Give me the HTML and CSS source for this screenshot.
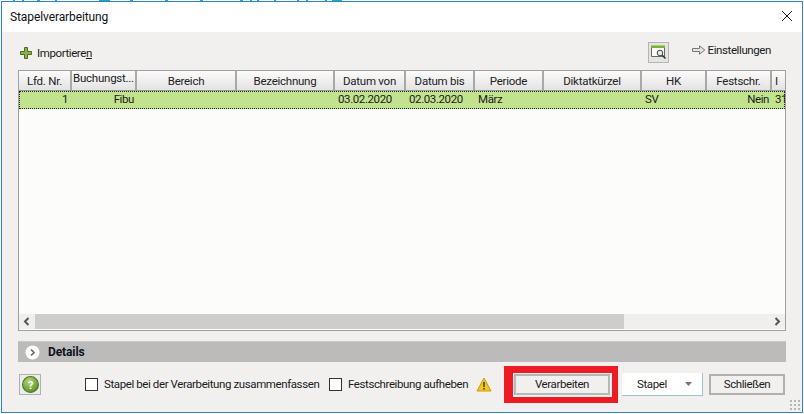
FILE: index.html
```html
<!DOCTYPE html>
<html lang="de">
<head>
<meta charset="utf-8">
<title>Stapelverarbeitung</title>
<link rel="stylesheet" href="styles.css">
</head>
<body>
<div class="backdrop"></div>
<main class="window">
  <header class="titlebar">
    <h1 class="title">Stapelverarbeitung</h1>
    <svg class="close" width="12" height="12" viewBox="0 0 12 12"><path d="M1 1l10 10M11 1L1 11" stroke="#1a1a1a" stroke-width="1" fill="none"/></svg>
  </header>
  <section class="content">
    <div class="toolbar">
      <div class="tool import">
        <svg width="12" height="12" viewBox="0 0 12 12"><path d="M4.500.5h3v4h4v3h-4v4h-3v-4h-4v-3h4z" fill="#8db04a" stroke="#4c6b22"/></svg>
        <span>Importiere<u>n</u></span>
      </div>
      <div class="tools-right">
        <div class="view-btn">
          <svg width="17" height="16" viewBox="0 0 17 16"><path d="M1.500 2.500h13v10h-13z" fill="#fafafa" stroke="#666"/><path d="M1 1.500h14v2.500H1z" fill="#77b52e"/><circle cx="10" cy="9" r="2.800" fill="#dceaf3" stroke="#444"/><path d="M12 11l3.500 3.500" stroke="#333" stroke-width="1.600"/></svg>
        </div>
        <div class="tool settings">
          <svg width="14" height="10" viewBox="0 0 14 10"><path d="M.5 3.500h7V.8L12.800 5 7.500 9.200V6.500h-7z" fill="#e4e4e4" stroke="#777"/></svg>
          <span>Einstellungen</span>
        </div>
      </div>
    </div>
    <div class="table">
      <div class="grid head">
        <div class="hcell">Lfd. Nr.</div>
        <div class="hcell up">Buchungst...</div>
        <div class="hcell">Bereich</div>
        <div class="hcell">Bezeichnung</div>
        <div class="hcell">Datum von</div>
        <div class="hcell">Datum bis</div>
        <div class="hcell">Periode</div>
        <div class="hcell">Diktatkürzel</div>
        <div class="hcell">HK</div>
        <div class="hcell">Festschr.</div>
        <div class="hcell left">I</div>
      </div>
      <div class="grid row">
        <div class="cell right num">1</div>
        <div class="cell right">Fibu</div>
        <div class="cell"></div>
        <div class="cell"></div>
        <div class="cell">03.02.2020</div>
        <div class="cell">02.03.2020</div>
        <div class="cell">März</div>
        <div class="cell"></div>
        <div class="cell">SV</div>
        <div class="cell right">Nein</div>
        <div class="cell">31</div>
      </div>
      <div class="empty"></div>
      <div class="scrollbar">
        <svg class="arrow" width="16" height="15" viewBox="0 0 16 15"><path d="M9.500 4L6 7.500 9.500 11" stroke="#555" stroke-width="2" fill="none"/></svg>
        <div class="track"><div class="thumb"></div></div>
        <svg class="arrow" width="16" height="15" viewBox="0 0 16 15"><path d="M6.500 4L10 7.500 6.500 11" stroke="#555" stroke-width="2" fill="none"/></svg>
      </div>
    </div>
    <div class="details">
      <svg width="15" height="15" viewBox="0 0 15 15"><circle cx="7.500" cy="7.500" r="7" fill="#fff"/><path d="M6 4.500l3 3-3 3" stroke="#666" stroke-width="1.600" fill="none"/></svg>
      <span>Details</span>
    </div>
    <footer class="footer">
      <div class="help">
        <svg width="17" height="17" viewBox="0 0 16 16"><defs><radialGradient id="g" cx=".4" cy=".3" r=".8"><stop offset="0" stop-color="#b5d77a"/><stop offset="1" stop-color="#4d8a1c"/></radialGradient></defs><circle cx="8" cy="8" r="7.500" fill="url(#g)" stroke="#4a7a22"/><text x="8" y="12" text-anchor="middle" class="qmark">?</text></svg>
      </div>
      <label class="check first"><span class="box"></span>Stapel bei der Verarbeitung zusammenfassen</label>
      <label class="check second"><span class="box"></span>Festschreibung aufheben</label>
      <svg class="warn" width="16" height="15" viewBox="0 0 16 15"><path d="M8 1l7 13H1z" fill="#f5c51f" stroke="#c99a12" stroke-linejoin="round"/><path d="M8 5v5" stroke="#5a4300" stroke-width="1.600"/><path d="M8 11v1.600" stroke="#5a4300" stroke-width="1.600"/></svg>
      <div class="btn primary">Verarbeiten<span class="marker"></span></div>
      <div class="btn split"><span>Stapel</span><svg width="7" height="4" viewBox="0 0 7 4"><path d="M0 0h7L3.500 4z" fill="#777"/></svg></div>
      <div class="btn close-btn">Schließen</div>
    </footer>
    <div class="grip"></div>
  </section>
</main>
</body>
</html>
```
FILE: styles.css
```css
* { box-sizing: border-box; }
html, body { margin: 0; padding: 0; }
body {
  width: 804px;
  height: 414px;
  overflow: hidden;
  position: relative;
  background: #fff;
  font-family: Roboto, "Liberation Sans", sans-serif;
  font-size: 11.5px;
  letter-spacing: -0.4px;
  color: #1b1b1b;
}
.backdrop {
  position: absolute;
  left: 0; top: 0;
  width: 345px;
  height: 1px;
  background: linear-gradient(90deg,
    #fff 0 13px, #2aa3b5 13px 15px, #fff 15px 22px, #2aa3b5 22px 24px, #fff 24px 37px, #2aa3b5 37px 40px,
    #fff 40px 55px, #2aa3b5 55px 57px, #fff 57px 99px, #2aa3b5 99px 110px, #fff 110px 130px, #2aa3b5 130px 133px,
    #fff 133px 165px, #2aa3b5 165px 168px, #fff 168px 200px, #2aa3b5 200px 203px, #fff 203px 240px, #2aa3b5 240px 243px,
    #fff 243px 250px, #2aa3b5 250px 252px, #fff 252px 257px, #2aa3b5 257px 259px, #fff 259px 274px, #2aa3b5 274px 276px,
    #fff 276px 297px, #2aa3b5 297px 299px, #fff 299px 306px, #2aa3b5 306px 308px, #fff 308px 325px, #2aa3b5 325px 327px,
    #fff 327px 332px, #2aa3b5 332px 342px, #fff 342px);
}
.window {
  position: relative;
  margin: 1px 1px 0 1px;
  width: 802px;
  height: 412px;
  border: 1px solid #2a86c8;
  display: flex;
  flex-direction: column;
  background: #f1f0ee;
}
.titlebar {
  height: 30px;
  background: #fff;
  display: flex;
  align-items: center;
  justify-content: space-between;
  padding: 0 9px 0 8px;
  flex: none;
}
.title { margin: 0; font-size: 12px; font-weight: 400; letter-spacing: -0.1px; color: #111; }
.close { margin-bottom: 2px; }
.content { flex: 1; padding: 0 16px 0 16px; position: relative; display: flex; flex-direction: column; }
.toolbar {
  height: 38px;
  display: flex;
  align-items: center;
  justify-content: space-between;
  padding: 2px 0 0 2px;
  flex: none;
}
.tool { display: flex; align-items: center; gap: 5px; }
.tool svg { flex: none; }
.import { margin-top: 2px; }
.tools-right { display: flex; align-items: center; margin-right: 15px; }
.view-btn {
  width: 21px; height: 21px;
  border: 1px solid #b4b4b4;
  background: #e4e4e2;
  display: flex; align-items: center; justify-content: center;
  margin-right: 23px;
}
.settings { margin-top: -4px; gap: 2px; white-space: nowrap; }
.table {
  height: 261px;
  border: 1px solid #a0a0a0;
  background: #fcfcfb;
  display: flex;
  flex-direction: column;
  overflow: hidden;
  flex: none;
}
.grid {
  display: grid;
  grid-template-columns: 53px 65px 100px 98px 71px 69px 69px 98px 65px 65px 1fr;
  flex: none;
}
.head { height: 20px; border-bottom: 1px solid #9a9a9a; background: linear-gradient(#fbfbfb, #e3e3e3); }
.hcell {
  border-right: 2px solid #a8a8a8;
  display: flex; align-items: center; justify-content: center;
  white-space: nowrap; overflow: hidden;
  letter-spacing: -0.25px;
  color: #222;
}
.hcell:last-child { border-right: 0; }
.hcell.left { justify-content: flex-start; padding-left: 3px; }
.hcell.up { align-items: flex-start; }
.row {
  height: 18px;
  background: #c2e38e;
  outline: 1px dotted #222;
  outline-offset: -1px;
  padding-top: 1px;
  line-height: 15px;
}
.cell { padding: 0 3px; white-space: nowrap; overflow: hidden; }
.cell.right { text-align: right; }
.cell.num { padding-right: 4px; }
.empty { flex: 1; }
.scrollbar {
  height: 15px;
  margin-bottom: 1px;
  display: flex;
  background: #efefef;
  flex: none;
}
.arrow { flex: none; }
.track { flex: 1; }
.thumb { width: 589px; height: 100%; background: #cdcdcd; }
.details {
  margin-top: 10px;
  height: 21px;
  background: #bbbbbb;
  border-top: 1px solid #c9c9c9;
  display: flex; align-items: center; gap: 8px;
  padding-left: 7px;
  font-weight: 700;
  font-size: 12px;
  letter-spacing: -0.1px;
  color: #10101a;
  flex: none;
}
.footer {
  margin-top: 11px;
  height: 22px;
  display: flex;
  align-items: center;
  position: relative;
  flex: none;
}
.help {
  width: 22px; height: 21px;
  margin-left: 1px;
  border: 1px solid #b0b0b0;
  background: #ececea;
  display: flex; align-items: center; justify-content: center;
  flex: none;
}
.qmark { font: 700 11px Roboto, sans-serif; fill: #fff; }
.check { display: flex; align-items: center; gap: 6px; white-space: nowrap; flex: none; }
.box { width: 13px; height: 13px; border: 1px solid #333; background: #fff; flex: none; }
.check.first { margin-left: 44px; width: 244px; }
.check.second { width: 147px; }
.warn { flex: none; }
.btn {
  height: 21px;
  border: 1px solid #b0b0b0;
  background: #f1f0ee;
  display: flex; align-items: center; justify-content: center;
  position: relative;
  flex: none;
}
.primary { width: 96px; margin-left: 22px; border: 2px solid #b8b8b8; }
.marker {
  position: absolute;
  left: -12px; top: -10px;
  width: 114px; height: 37px;
  border-style: solid;
  border-color: #ed1c24;
  border-width: 7px 6px 6px 9px;
  pointer-events: none;
}
.split {
  width: 81px; height: 23px;
  margin-left: 12px;
  background: #fff;
  border: 0;
  border-right: 1px solid #9cc4cf;
  border-bottom: 1px solid #9cc4cf;
  justify-content: space-between;
  padding: 0 10px 0 15px;
}
.close-btn { width: 76px; margin-left: 6px; border-width: 2px; }
.grip {
  position: absolute;
  right: 2px; bottom: 2px;
  width: 11px; height: 11px;
  background: radial-gradient(circle, #b5b5b5 1px, transparent 1.2px) 0 0 / 4px 4px;
}
```
